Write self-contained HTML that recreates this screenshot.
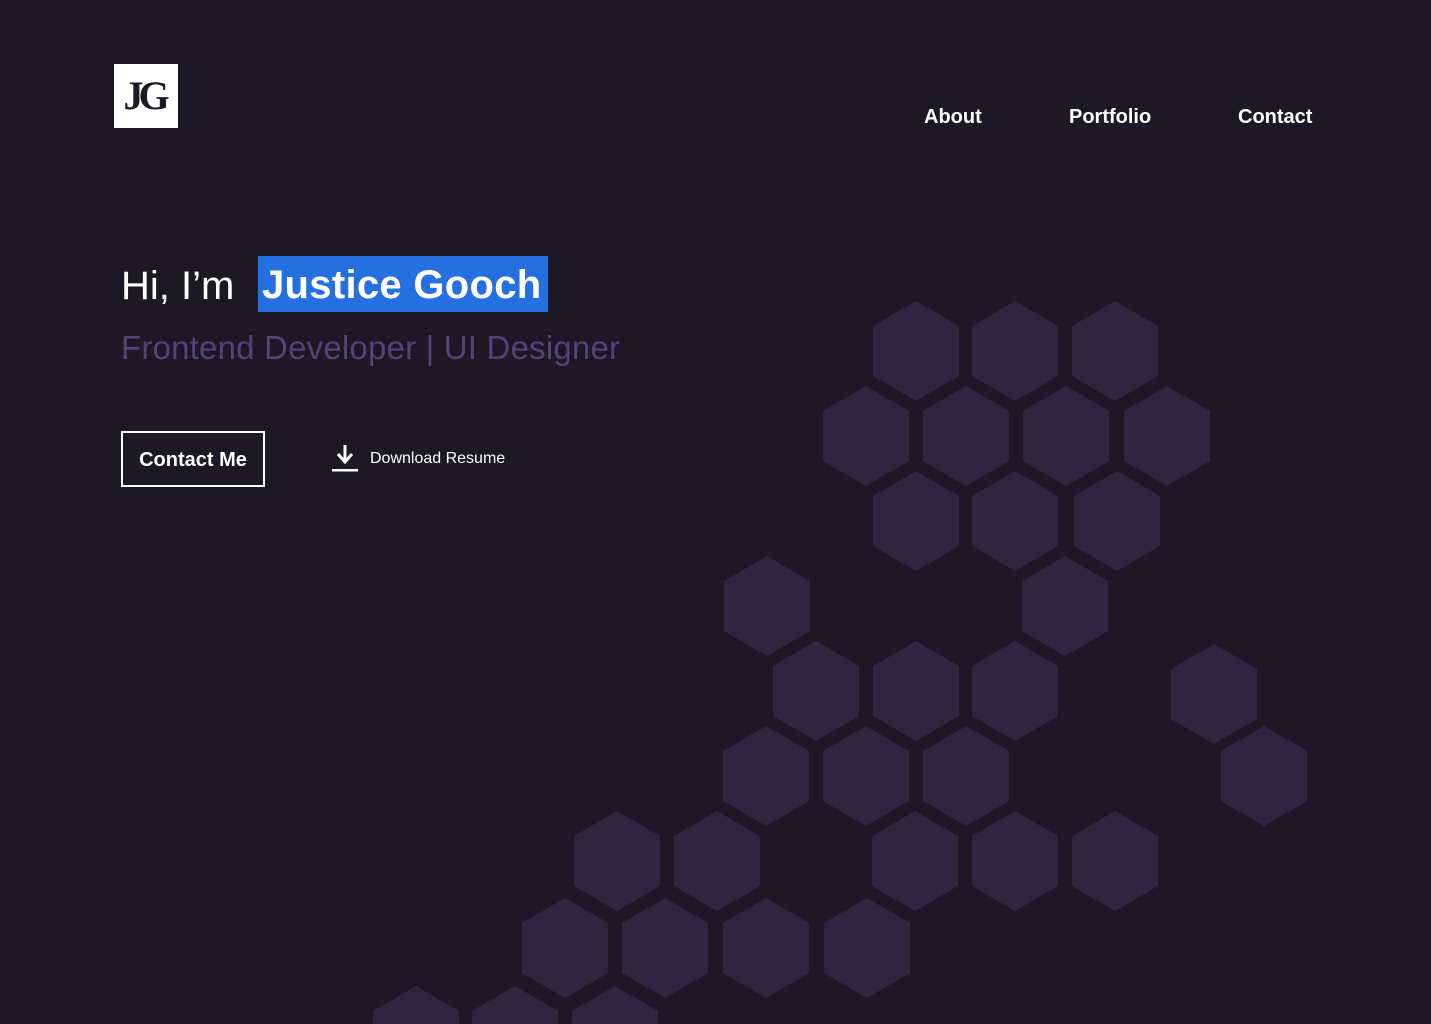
<!DOCTYPE html>
<html><head><meta charset="utf-8"><style>
*{margin:0;padding:0;box-sizing:border-box}
html,body{width:1431px;height:1024px;overflow:hidden}
body{background:#1c1826;position:relative;font-family:"Liberation Sans",sans-serif;color:#fff}
.logo{position:absolute;left:114px;top:64px;width:64px;height:64px;background:#fff;color:#1c1826;font-family:"Liberation Serif",serif;font-weight:bold;font-size:40px;text-align:center;line-height:64px;letter-spacing:-5px;padding-right:4px}
nav a{position:absolute;top:106px;font-weight:bold;font-size:20px;color:#fff;text-decoration:none}
.hi{position:absolute;left:121px;top:264px;font-size:40px;font-weight:normal}
.name{position:absolute;left:258px;top:256px;width:290px;height:56px;background:#2470e0;font-weight:bold;font-size:40px;line-height:58px;padding-left:4px;white-space:nowrap;letter-spacing:0.3px}
.sub{position:absolute;left:121px;top:329px;font-size:33px;color:#4f4578;white-space:nowrap;letter-spacing:0.2px}
.btn{position:absolute;left:121px;top:431px;width:144px;height:56px;border:2px solid #fff;font-weight:bold;font-size:20px;line-height:54px;text-align:center}
.dl{position:absolute;left:370px;top:450px;font-size:16px}
svg.hex{position:absolute;left:0;top:0}
</style></head><body>
<svg class="hex" width="1431" height="1024">
<defs><polygon id="h" points="0,-50 43,-25 43,25 0,50 -43,25 -43,-25" fill="#2e2640"/></defs>
<g>
<use href="#h" x="916" y="351"/><use href="#h" x="1015" y="351"/><use href="#h" x="1115" y="351"/>
<use href="#h" x="866" y="436"/><use href="#h" x="966" y="436"/><use href="#h" x="1066" y="436"/><use href="#h" x="1167" y="436"/>
<use href="#h" x="916" y="521"/><use href="#h" x="1015" y="521"/><use href="#h" x="1117" y="521"/>
<use href="#h" x="767" y="606"/><use href="#h" x="1065" y="606"/>
<use href="#h" x="816" y="691"/><use href="#h" x="916" y="691"/><use href="#h" x="1015" y="691"/><use href="#h" x="1214" y="694"/>
<use href="#h" x="766" y="776"/><use href="#h" x="866" y="776"/><use href="#h" x="966" y="776"/><use href="#h" x="1264" y="776"/>
<use href="#h" x="617" y="861"/><use href="#h" x="717" y="861"/><use href="#h" x="915" y="861"/><use href="#h" x="1015" y="861"/><use href="#h" x="1115" y="861"/>
<use href="#h" x="565" y="948"/><use href="#h" x="665" y="948"/><use href="#h" x="766" y="948"/><use href="#h" x="867" y="948"/>
<use href="#h" x="416" y="1036"/><use href="#h" x="515" y="1036"/><use href="#h" x="615" y="1036"/>
</g>
<path d="M345 445v16M338 454l7 8 7-8" stroke="#fff" stroke-width="3" fill="none"/>
<rect x="332" y="469" width="26" height="2.5" fill="#fff"/>
</svg>
<div class="logo">JG</div>
<nav><a style="left:924px">About</a><a style="left:1069px">Portfolio</a><a style="left:1238px">Contact</a></nav>
<div class="hi">Hi, I’m</div>
<div class="name">Justice Gooch</div>
<div class="sub">Frontend Developer | UI Designer</div>
<div class="btn">Contact Me</div>
<div class="dl">Download Resume</div>
</body></html>
